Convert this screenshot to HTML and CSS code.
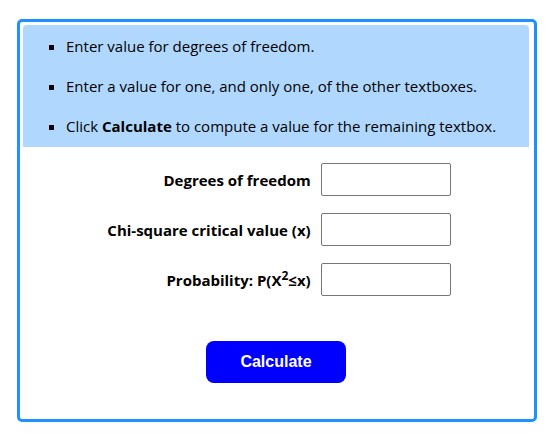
FILE: index.html
```html
<!DOCTYPE html>
<html lang="en">
  <head>
    <meta charset="UTF-8" />
    <title>Chi-square Calculator</title>
    <link rel="stylesheet" href="styles.css">
  </head>
  <body>
    <div class="calc">
      <ul class="help">
        <li>Enter value for degrees of freedom.</li>
        <li>Enter a value for one, and only one, of the other textboxes.</li>
        <li>Click <b>Calculate</b> to compute a value for the remaining textbox.</li>
      </ul>

      <form class="fields" onsubmit="return false">
        <label for="df">Degrees of freedom</label>
        <input type="text" id="df" name="df" />

        <label for="cv">Chi-square critical value (x)</label>
        <input type="text" id="cv" name="cv" />

        <label for="prob">Probability: P(X<sup>2</sup>&le;x)</label>
        <input type="text" id="prob" name="prob" />

        <div class="actions">
          <button type="submit">Calculate</button>
        </div>
      </form>
    </div>
  </body>
</html>
```

FILE: styles.css
```css
body {
  margin: 0;
  padding: 19px 17px;
  font-family: "Open Sans", "Noto Sans", sans-serif;
  color: #000;
  background: #fff;
}

.calc {
  width: 506px;
  border: 3px solid #1e90ff;
  border-radius: 5px;
  padding: 3px 5px 0 3px;
}

.help {
  margin: 0;
  padding: 11px 10px 11px 43px;
  background-color: #b0d8ff;
  border-radius: 4px 4px 0 0;
  list-style: square;
  font-size: 15px;
  line-height: 20px;
}

.help li + li {
  margin-top: 20px;
}

.fields {
  display: grid;
  grid-template-columns: auto 130px;
  justify-content: center;
  align-items: center;
  column-gap: 10px;
  row-gap: 17px;
  padding: 16px 0 36px;
  margin-left: 6px;
}

.fields label {
  text-align: right;
  font-weight: bold;
  font-size: 15px;
}

.fields sup {
  font-size: 12px;
  line-height: 0;
  vertical-align: 6px;
}

.fields input {
  box-sizing: border-box;
  width: 130px;
  height: 33px;
  border: 1px solid #767676;
  border-radius: 2px;
  padding: 2px 6px;
  font-size: 15px;
}

.actions {
  grid-column: 1 / -1;
  display: flex;
  justify-content: center;
  margin-top: 28px;
  margin-left: -6px;
}

.actions button {
  width: 140px;
  height: 42px;
  border: none;
  border-radius: 8px;
  background-color: #0000ff;
  color: #fff;
  font-family: "Liberation Sans", Arial, sans-serif;
  font-weight: bold;
  font-size: 16px;
  cursor: pointer;
}
```
